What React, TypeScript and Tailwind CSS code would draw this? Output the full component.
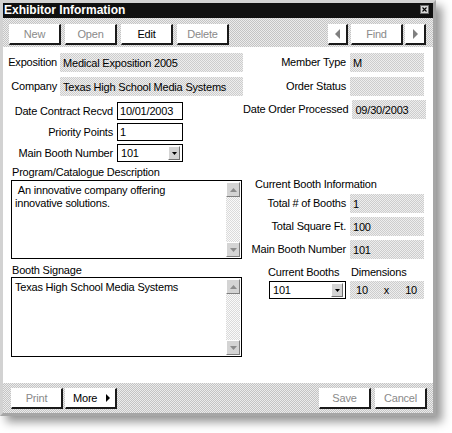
import React from "react";

const checker =
  "bg-[image:repeating-conic-gradient(#c4c4c4_0_25%,#ececec_0_50%)] bg-[length:2px_2px]";
const fieldBg =
  "bg-[image:repeating-conic-gradient(#cdcdcd_0_25%,#eeeeee_0_50%)] bg-[length:2px_2px]";
const trackBg =
  "bg-[image:repeating-conic-gradient(#dadada_0_25%,#fafafa_0_50%)] bg-[length:2px_2px]";

function Btn({
  className = "justify-center",
  disabled = false,
  children,
}: {
  className?: string;
  disabled?: boolean;
  children: React.ReactNode;
}) {
  return (
    <div
      className={
        "h-[21px] flex items-center bg-white border-t border-l border-t-white border-l-white border-r-2 border-b-2 border-r-[#1a1a1a] border-b-[#1a1a1a] " +
        (disabled ? "text-[#8a8a8a] " : "text-black ") +
        className
      }
    >
      {children}
    </div>
  );
}

function RO({ w, children }: { w: string; children?: React.ReactNode }) {
  return (
    <div className={fieldBg + " h-[19px] flex items-center pl-[3px] pt-[1px] " + w}>
      {children}
    </div>
  );
}

function Input({ w, value }: { w: string; value: string }) {
  return (
    <div className={"h-[18px] border border-black bg-white flex items-center pl-[2px] " + w}>
      {value}
    </div>
  );
}

function Sel({ w, value }: { w: string; value: string }) {
  return (
    <div
      className={
        "h-[18px] border border-black bg-white flex items-center justify-between pl-[3px] pr-[2px] " + w
      }
    >
      <span>{value}</span>
      <div className="w-[12px] h-[14px] bg-[#d4d4d4] border-t border-l border-t-white border-l-white border-r border-b border-r-[#707070] border-b-[#707070] flex items-center justify-center">
        <svg width="5" height="3" viewBox="0 0 5 3">
          <path d="M0 0H5L2.5 3Z" fill="#000" />
        </svg>
      </div>
    </div>
  );
}

function SBtn({ up }: { up?: boolean }) {
  return (
    <div className="h-[15px] w-[14px] bg-[#d4d4d4] border-t border-l border-t-white border-l-white border-r border-b border-r-[#808080] border-b-[#808080] flex items-center justify-center">
      <svg width="7" height="4" viewBox="0 0 7 4">
        <path d={up ? "M3.5 0L7 4H0Z" : "M0 0H7L3.5 4Z"} fill="#8c8c8c" />
      </svg>
    </div>
  );
}

function TA({ h, text }: { h: string; text: string }) {
  return (
    <div className={"w-[231px] border border-black bg-white flex " + h}>
      <div className="flex-1 pl-[3px] pt-[3px] whitespace-pre-wrap">{text}</div>
      <div className="w-[15px] flex flex-col py-[1px] pr-[1px]">
        <SBtn up />
        <div className={"flex-1 w-[14px] " + trackBg} />
        <SBtn />
      </div>
    </div>
  );
}

export default function App() {
  return (
    <div className="w-[452px] h-[433px] bg-white overflow-hidden font-['Liberation_Sans',Arial,sans-serif] text-[11px] leading-[13px] tracking-[-0.2px] text-black">
      <div className="w-[436px] h-[416px] flex flex-col border-[3px] border-t-[#d2d2d2] border-l-[#d2d2d2] border-r-[#a6a6a6] border-b-[#a6a6a6] shadow-[6px_6px_9px_rgba(0,0,0,0.42)]">
        {/* Title bar */}
        <div className="h-[15px] bg-[#101010] flex items-start justify-between pl-[1px] pr-[4px]">
          <span className="text-white font-bold text-[12px] leading-[15px] tracking-normal">Exhibitor Information</span>
          <div className="mt-[2px] w-[9px] h-[9px] bg-[#d8d8d8] border border-[#6a6a6a] flex items-center justify-center">
            <svg width="5" height="5" viewBox="0 0 5 5">
              <path d="M0.5 0.5L4.5 4.5M4.5 0.5L0.5 4.5" stroke="#000" strokeWidth="1.1" />
            </svg>
          </div>
        </div>

        {/* Toolbar */}
        <div className={checker + " h-[29px] flex items-start justify-between pt-[6px] pl-[6px] pr-[7px]"}>
          <div className="flex gap-[4px]">
            <Btn className="w-[52px] justify-center" disabled>New</Btn>
            <Btn className="w-[52px] justify-center" disabled>Open</Btn>
            <Btn className="w-[52px] justify-center">Edit</Btn>
            <Btn className="w-[52px] justify-center" disabled>Delete</Btn>
          </div>
          <div className="flex">
            <Btn className="w-[20px] justify-center" disabled>
              <svg width="5" height="10" viewBox="0 0 5 10">
                <path d="M5 0L0 5L5 10Z" fill="#808080" />
              </svg>
            </Btn>
            <Btn className="w-[52px] ml-[3px] justify-center" disabled>Find</Btn>
            <Btn className="w-[21px] ml-[2px] justify-center" disabled>
              <svg width="5" height="10" viewBox="0 0 5 10">
                <path d="M0 0L5 5L0 10Z" fill="#808080" />
              </svg>
            </Btn>
          </div>
        </div>

        {/* Content */}
        <div className="flex-1 bg-white flex flex-col">
          {/* Top section */}
          <div className="flex">
            <div className="w-[240px] pt-[6px] flex flex-col">
              <div className="flex items-center gap-[3px]">
                <div className="w-[54px] text-right">Exposition</div>
                <RO w="w-[183px]">Medical Exposition 2005</RO>
              </div>
              <div className="flex items-center gap-[3px] mt-[5px]">
                <div className="w-[54px] text-right">Company</div>
                <RO w="w-[183px]">Texas High School Media Systems</RO>
              </div>
              <div className="flex items-center gap-[4px] mt-[6px]">
                <div className="w-[110px] text-right">Date Contract Recvd</div>
                <Input w="w-[66px]" value="10/01/2003" />
              </div>
              <div className="flex items-center gap-[4px] mt-[3px]">
                <div className="w-[110px] text-right">Priority Points</div>
                <Input w="w-[66px]" value="1" />
              </div>
              <div className="flex items-center gap-[4px] mt-[3px]">
                <div className="w-[110px] text-right">Main Booth Number</div>
                <Sel w="w-[66px]" value="101" />
              </div>
            </div>
            <div className="flex-1 pt-[6px] flex flex-col">
              <div className="flex items-center gap-[4px]">
                <div className="w-[103px] text-right">Member Type</div>
                <RO w="w-[74px]">M</RO>
              </div>
              <div className="flex items-center gap-[4px] mt-[5px]">
                <div className="w-[103px] text-right">Order Status</div>
                <RO w="w-[74px]" />
              </div>
              <div className="flex items-center justify-end gap-[4px] mt-[4px] pr-[9px]">
                <div className="text-right whitespace-nowrap">Date Order Processed</div>
                <RO w="w-[74px] shrink-0">09/30/2003</RO>
              </div>
            </div>
          </div>

          {/* Lower section */}
          <div className="flex">
            <div className="w-[240px] pl-[8px] flex flex-col">
              <div className="mt-[4px] pl-[1px] h-[13px]">Program/Catalogue Description</div>
              <div className="mt-[1px]">
                <TA h="h-[79px]" text={" An innovative company offering\ninnovative solutions."} />
              </div>
              <div className="mt-[5px] pl-[1px] h-[13px]">Booth Signage</div>
              <TA h="h-[80px]" text="Texas High School Media Systems" />
            </div>
            <div className="flex-1 flex flex-col">
              <div className="mt-[16px] pl-[12px] h-[13px]">Current Booth Information</div>
              <div className="flex items-center gap-[4px] mt-[3px]">
                <div className="w-[103px] text-right">Total # of Booths</div>
                <RO w="w-[74px]">1</RO>
              </div>
              <div className="flex items-center gap-[4px] mt-[4px]">
                <div className="w-[103px] text-right">Total Square Ft.</div>
                <RO w="w-[74px]">100</RO>
              </div>
              <div className="flex items-center gap-[4px] mt-[4px]">
                <div className="w-[103px] text-right whitespace-nowrap">Main Booth Number</div>
                <RO w="w-[74px]">101</RO>
              </div>
              <div className="flex gap-[4px] mt-[7px] ml-[26px]">
                <div className="w-[77px] flex flex-col">
                  <div className="h-[13px] -ml-[1px]">Current Booths</div>
                  <div className="mt-[2px]">
                    <Sel w="w-[77px]" value="101" />
                  </div>
                </div>
                <div className="w-[74px] flex flex-col">
                  <div className="h-[13px] pl-[1px]">Dimensions</div>
                  <div className={fieldBg + " mt-[2px] h-[18px] flex items-center justify-between pl-[6px] pr-[7px]"}>
                    <span>10</span>
                    <span>x</span>
                    <span>10</span>
                  </div>
                </div>
              </div>
            </div>
          </div>
        </div>

        {/* Bottom bar */}
        <div className={checker + " h-[30px] flex items-start justify-between pt-[5px] pl-[8px] pr-[6px]"}>
          <div className="flex gap-[2px]">
            <Btn className="w-[52px] justify-center" disabled>Print</Btn>
            <Btn className="w-[52px] justify-between pl-[7px] pr-[5px]">
              <span>More</span>
              <svg width="4" height="8" viewBox="0 0 4 8">
                <path d="M0 0L4 4L0 8Z" fill="#000" />
              </svg>
            </Btn>
          </div>
          <div className="flex gap-[4px]">
            <Btn className="w-[52px] justify-center" disabled>Save</Btn>
            <Btn className="w-[52px] justify-center" disabled>Cancel</Btn>
          </div>
        </div>
      </div>
    </div>
  );
}
